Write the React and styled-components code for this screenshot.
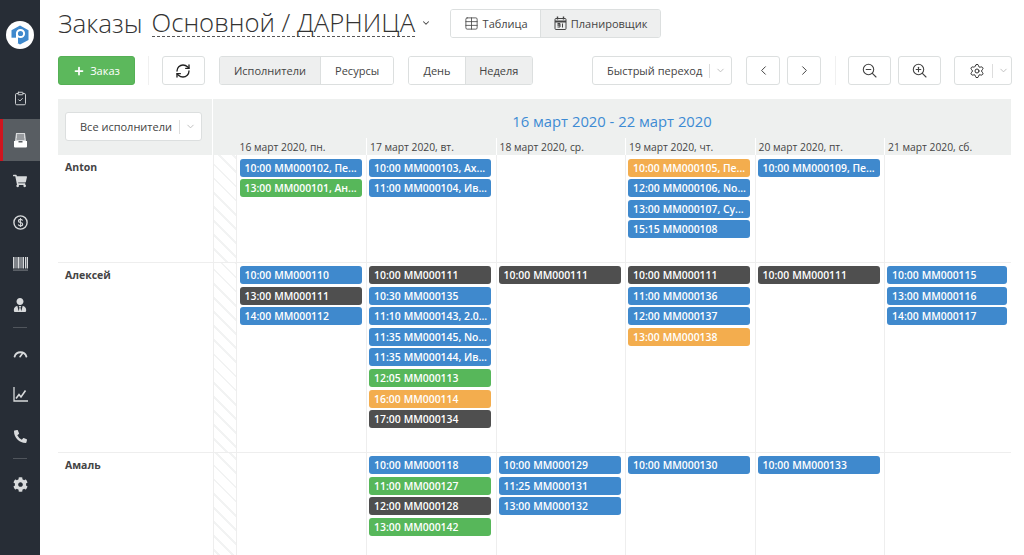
import React from 'react';
import styled, { createGlobalStyle } from 'styled-components';
import {
  ChevronDown, ChevronLeft, ChevronRight, ClipboardCheck,
  RefreshCw, Settings, Plus, Table,
} from 'lucide-react';
import { FaCog, FaPhoneAlt, FaUserTie, FaShoppingCart } from 'react-icons/fa';

const GlobalStyle = createGlobalStyle`
  html, body { margin: 0; height: 100%; overflow: hidden; background: #fff; }
  body { font-family: "Open Sans", "Liberation Sans", sans-serif; color: #444; }
  * { box-sizing: border-box; }
`;

const Page = styled.div`
  display: flex;
  height: 555px;
  overflow: hidden;
`;

const Sidebar = styled.nav`
  width: 40px;
  flex: none;
  background: #272d36;
  display: flex;
  flex-direction: column;
  align-items: stretch;
  padding-top: 21px;
`;

const LogoWrap = styled.div`
  height: 28px;
  display: flex;
  justify-content: center;
  margin-bottom: 29px;
`;

const NavItem = styled.div`
  height: 41.3px;
  flex: none;
  display: flex;
  align-items: center;
  justify-content: center;
  color: #d8dadc;
  background: ${p => (p.$active ? '#585d62' : 'transparent')};
  border-left: ${p => (p.$active ? '3px solid #d0141e' : '0')};
  padding-right: ${p => (p.$active ? '3px' : '0')};
`;

const NavRule = styled.div`
  width: 14px;
  height: 1px;
  flex: none;
  background: #50555c;
  margin: 1px auto 5px;
`;

const Main = styled.main`
  flex: 1;
  min-width: 0;
  padding: 8px 12px 0 18px;
`;

const TitleRow = styled.div`
  display: flex;
  align-items: center;
  height: 30px;
`;

const Title = styled.h1`
  margin: 0;
  font-size: 26px;
  line-height: 30px;
  font-weight: 300;
  color: #333;
  white-space: nowrap;
`;

const Branch = styled(Title)`
  margin-left: 9px;
  border-bottom: 1px dashed #555;
  height: 28px;
  line-height: 28px;
  font-size: 25.7px;
`;

const Caret = styled.span`
  margin: 0 19px 0 6px;
  display: flex;
  color: #444;
`;

const Toolbar = styled.div`
  display: flex;
  align-items: center;
  height: 29px;
  margin-top: 18px;
`;

const Segment = styled.div`
  display: flex;
  height: 29px;
  margin-left: ${p => p.$ml || 0}px;
  border: 1px solid #dcdfdf;
  border-radius: 3px;
  overflow: hidden;
`;

const SegmentItem = styled.div`
  width: ${p => p.$w}px;
  display: flex;
  align-items: center;
  justify-content: center;
  gap: 4px;
  font-size: 11px;
  color: #444;
  white-space: nowrap;
  background: ${p => (p.$on ? '#eeefef' : '#fff')};
  & + & { border-left: 1px solid #dcdfdf; }
`;

const Button = styled.div`
  height: 29px;
  width: ${p => p.$w}px;
  flex: none;
  margin-left: ${p => p.$ml || 0}px;
  border: 1px solid #dcdfdf;
  border-radius: 3px;
  background: #fff;
  display: flex;
  align-items: center;
  justify-content: center;
  color: #444;
  font-size: 11px;
  white-space: nowrap;
`;

const AddButton = styled(Button)`
  background: #5cb85c;
  border-color: #55b055;
  color: #fff;
  gap: 5px;
`;

const Divider = styled.div`
  width: 1px;
  height: 29px;
  background: #f0f0f0;
  margin-left: ${p => p.$ml}px;
`;

const SelectButton = styled(Button)`
  justify-content: flex-start;
  padding-left: ${p => p.$pl || 14}px;
`;

const SelectBar = styled.span`
  width: 1px;
  height: 14px;
  background: #ddd;
  margin: 0 5px 0 7px;
`;

const Board = styled.section`
  margin-top: 14px;
  width: 953px;
`;

const Row = styled.div`
  display: grid;
  grid-template-columns: 155px 23.5px repeat(5, 129.5px) 1fr;
  height: ${p => p.$h}px;
  border-bottom: ${p => (p.$last ? '0' : '1px solid #eee')};
`;

const HeadRow = styled.div`
  display: grid;
  grid-template-columns: 155px 1fr;
  height: 56px;
  background: #eef0ef;
`;

const FilterCell = styled.div`
  border-right: 1px solid #fff;
  padding: 13px 10px 0 7px;
`;

const WeekHead = styled.div`
  display: grid;
  grid-template-columns: 23.5px repeat(5, 129.5px) 1fr;
  grid-template-rows: 1fr 17px;
`;

const WeekTitle = styled.div`
  grid-column: 1 / -1;
  text-align: center;
  color: #3d8bd4;
  font-size: 14.8px;
  line-height: 45px;
  height: 39px;
`;

const DayLabel = styled.div`
  font-size: 10.3px;
  line-height: 18px;
  color: #444;
  padding-left: 3px;
  white-space: nowrap;
  border-left: ${p => (p.$first ? '0' : '1px solid #fff')};
`;

const Name = styled.div`
  font-size: 10.5px;
  font-weight: 700;
  color: #444;
  padding: 5px 0 0 7px;
`;

const Stripe = styled.div`
  border-left: 1px solid #eee;
  border-right: 1px solid #eee;
  background: repeating-linear-gradient(45deg, #fff, #fff 8px, #f2f3f3 8px, #f2f3f3 10px);
`;

const DayCell = styled.div`
  min-width: 0;
  padding: 3.5px 4.5px 0 ${p => (p.$first ? 3 : 2)}px;
  border-left: ${p => (p.$first ? '0' : '1px solid #eee')};
  display: flex;
  flex-direction: column;
  gap: 2.6px;
`;

const COLORS = { blue: '#3f89cd', green: '#57b75a', orange: '#f3ad4e', dark: '#4f4f4f' };

const Event = styled.div`
  height: 18px;
  flex: none;
  border-radius: 3px;
  padding: 0 4px 0 5px;
  font-size: 10.4px;
  line-height: 18px;
  font-weight: 600;
  color: #fff;
  white-space: nowrap;
  overflow: hidden;
  background: ${p => COLORS[p.$c]};
  b { font-weight: 600; margin-right: 3px; }
`;

const DAYS = ['16 март 2020, пн.', '17 март 2020, вт.', '18 март 2020, ср.', '19 март 2020, чт.', '20 март 2020, пт.', '21 март 2020, сб.'];

const ROWS = [
  {
    name: 'Anton',
    h: 107.5,
    days: [
      [['blue', '10:00', 'MM000102, Пе...'], ['green', '13:00', 'MM000101, Ан...']],
      [['blue', '10:00', 'MM000103, Ах...'], ['blue', '11:00', 'MM000104, Ив...']],
      [],
      [['orange', '10:00', 'MM000105, Пе...'], ['blue', '12:00', 'MM000106, No...'], ['blue', '13:00', 'MM000107, Су...'], ['blue', '15:15', 'MM000108']],
      [['blue', '10:00', 'MM000109, Пе...']],
      [],
    ],
  },
  {
    name: 'Алексей',
    h: 190,
    days: [
      [['blue', '10:00', 'MM000110'], ['dark', '13:00', 'MM000111'], ['blue', '14:00', 'MM000112']],
      [['dark', '10:00', 'MM000111'], ['blue', '10:30', 'MM000135'], ['blue', '11:10', 'MM000143, 2.0...'], ['blue', '11:35', 'MM000145, No...'], ['blue', '11:35', 'MM000144, Ив...'], ['green', '12:05', 'MM000113'], ['orange', '16:00', 'MM000114'], ['dark', '17:00', 'MM000134']],
      [['dark', '10:00', 'MM000111']],
      [['dark', '10:00', 'MM000111'], ['blue', '11:00', 'MM000136'], ['blue', '12:00', 'MM000137'], ['orange', '13:00', 'MM000138']],
      [['dark', '10:00', 'MM000111']],
      [['blue', '10:00', 'MM000115'], ['blue', '13:00', 'MM000116'], ['blue', '14:00', 'MM000117']],
    ],
  },
  {
    name: 'Амаль',
    h: 110,
    last: true,
    days: [
      [],
      [['blue', '10:00', 'MM000118'], ['green', '11:00', 'MM000127'], ['dark', '12:00', 'MM000128'], ['green', '13:00', 'MM000142']],
      [['blue', '10:00', 'MM000129'], ['blue', '11:25', 'MM000131'], ['blue', '13:00', 'MM000132']],
      [['blue', '10:00', 'MM000130']],
      [['blue', '10:00', 'MM000133']],
      [],
    ],
  },
];

const Logo = () => (
  <svg width="28" height="28" viewBox="0 0 28 28">
    <circle cx="14" cy="14" r="14" fill="#fff" />
    <path d="M14 4.5l8.5 4.8v9.6L14 23.5l-4-2.2v-4H5.5V9.3z" fill="#3f89cd" />
    <circle cx="14.5" cy="12.5" r="3.6" fill="none" stroke="#fff" strokeWidth="2" />
    <path d="M11 12.5V22" stroke="#fff" strokeWidth="2" />
    <path d="M4 17.5h7" stroke="#fff" strokeWidth="1.6" />
  </svg>
);

const InboxIcon = () => (
  <svg width="15" height="16" viewBox="0 0 15 16" fill="none">
    <path d="M3 1h9l1 8H2z" fill="#d8dadc" />
    <path d="M4 3h7M4 5h7M3.6 7h7.8" stroke="#585d62" strokeWidth="1" />
    <path d="M1 9h4.5v1.5h4V9H14v5.5a1 1 0 0 1-1 1H2a1 1 0 0 1-1-1z" fill="#fff" />
  </svg>
);

const DollarIcon = () => (
  <svg width="15" height="15" viewBox="0 0 15 15" fill="none" stroke="#d8dadc">
    <circle cx="7.5" cy="7.5" r="6.6" strokeWidth="1.4" />
    <path d="M9.6 5.6C9.2 4.6 8.4 4.3 7.5 4.3c-1.2 0-2 .6-2 1.6s.9 1.4 2 1.6 2.1.7 2.1 1.7-.9 1.6-2.1 1.6c-1 0-1.8-.4-2.2-1.3" strokeWidth="1.2" />
    <path d="M7.5 3v9" strokeWidth=".9" />
  </svg>
);

const BarcodeIcon = () => (
  <svg width="15" height="14" viewBox="0 0 15 14" fill="#d8dadc">
    <path d="M0 0h1.5v11.5H0zM2.5 0h1v11.5h-1zM4.5 0h2v11.5h-2zM7.5 0h1v11.5h-1zM9.5 0h1.5v11.5H9.5zM12 0h1v11.5h-1zM13.6 0h1.4v11.5h-1.4z" />
    <path d="M0 12.6h15v1H0z" opacity=".5" />
  </svg>
);

const GaugeIcon = () => (
  <svg width="15" height="10" viewBox="0 0 16 11" fill="none" stroke="#d8dadc">
    <path d="M1.5 9.5a6.8 6.8 0 0 1 13 0" strokeWidth="2" strokeLinecap="round" />
    <path d="M7.5 9.5l3-4" strokeWidth="1.8" strokeLinecap="round" />
  </svg>
);

const ChartIcon = () => (
  <svg width="15" height="15" viewBox="0 0 15 15" fill="none" stroke="#d8dadc">
    <path d="M1 0v14h14" strokeWidth="1.3" />
    <path d="M3 11.5l3-4 2 2.5 4.5-6.5" strokeWidth="1.6" />
  </svg>
);

const PlannerIcon = () => (
  <svg width="13" height="14" viewBox="0 0 13 14" fill="none" stroke="#444">
    <rect x="1" y="2.5" width="11" height="11" rx="1" />
    <path d="M1 5.5h11" strokeWidth="2" />
    <path d="M3.5 .5v3M9.5 .5v3" strokeWidth="1.4" />
    <path d="M3.5 7.5h2.5v1.5h-2.5h2.5v2h-2.5M8.5 7.5v4" />
  </svg>
);

const ZoomIcon = ({ plus }) => (
  <svg width="15" height="15" viewBox="0 0 15 15" fill="none" stroke="#444" strokeWidth="1.1" strokeLinecap="round">
    <circle cx="6.5" cy="6.5" r="5.2" />
    <path d="M10.4 10.4l3.6 3.6M4.2 6.5h4.6" />
    {plus && <path d="M6.5 4.2v4.6" />}
  </svg>
);

const SelectCaret = () => <ChevronDown size={11} color="#bbb" />;

const App = () => {
  return (
    <Page>
      <GlobalStyle />
      <Sidebar>
        <LogoWrap><Logo /></LogoWrap>
        <NavItem><ClipboardCheck size={15} strokeWidth={1.5} /></NavItem>
        <NavItem $active><InboxIcon /></NavItem>
        <NavItem><FaShoppingCart size={14} /></NavItem>
        <NavItem><DollarIcon /></NavItem>
        <NavItem><BarcodeIcon /></NavItem>
        <NavItem><FaUserTie size={14} /></NavItem>
        <NavRule />
        <NavItem><GaugeIcon /></NavItem>
        <NavItem><ChartIcon /></NavItem>
        <NavItem><FaPhoneAlt size={13} /></NavItem>
        <NavRule />
        <NavItem><FaCog size={15} /></NavItem>
      </Sidebar>

      <Main>
        <TitleRow>
          <Title>Заказы</Title>
          <Branch>Основной / ДАРНИЦА</Branch>
          <Caret><ChevronDown size={10} strokeWidth={2.5} /></Caret>
          <Segment>
            <SegmentItem $w={89}><Table size={15} strokeWidth={1.3} />Таблица</SegmentItem>
            <SegmentItem $w={120} $on><PlannerIcon />Планировщик</SegmentItem>
          </Segment>
        </TitleRow>

        <Toolbar>
          <AddButton $w={77}><Plus size={12} strokeWidth={3.5} />Заказ</AddButton>
          <Divider $ml={13} />
          <Button $w={43} $ml={13}><RefreshCw size={16} strokeWidth={2} color="#222" /></Button>
          <Segment $ml={14}>
            <SegmentItem $w={101} $on>Исполнители</SegmentItem>
            <SegmentItem $w={74}>Ресурсы</SegmentItem>
          </Segment>
          <Segment $ml={14}>
            <SegmentItem $w={56}>День</SegmentItem>
            <SegmentItem $w={68} $on>Неделя</SegmentItem>
          </Segment>
          <SelectButton $w={140} $ml={59}>Быстрый переход<SelectBar /><SelectCaret /></SelectButton>
          <Button $w={34} $ml={14}><ChevronLeft size={15} strokeWidth={1.6} /></Button>
          <Button $w={34} $ml={7}><ChevronRight size={15} strokeWidth={1.6} /></Button>
          <Divider $ml={14} />
          <Button $w={43} $ml={12}><ZoomIcon /></Button>
          <Button $w={43} $ml={7}><ZoomIcon plus /></Button>
          <SelectButton $w={58} $ml={13} $pl={14}><Settings size={16} strokeWidth={1.5} color="#333" /><SelectBar /><SelectCaret /></SelectButton>
        </Toolbar>

        <Board>
          <HeadRow>
            <FilterCell>
              <SelectButton $w={137} $pl={14}>Все исполнители<SelectBar /><SelectCaret /></SelectButton>
            </FilterCell>
            <WeekHead>
              <WeekTitle>16 март 2020 - 22 март 2020</WeekTitle>
              <div />
              {DAYS.map((d, i) => <DayLabel key={d} $first={i === 0}>{d}</DayLabel>)}
            </WeekHead>
          </HeadRow>
          {ROWS.map(r => (
            <Row key={r.name} $h={r.h} $last={r.last}>
              <Name>{r.name}</Name>
              <Stripe />
              {r.days.map((events, i) => (
                <DayCell key={i} $first={i === 0}>
                  {events.map(([c, time, text]) => (
                    <Event key={time + text} $c={c}><b>{time}</b>{text}</Event>
                  ))}
                </DayCell>
              ))}
            </Row>
          ))}
        </Board>
      </Main>
    </Page>
  );
};

export default App;
